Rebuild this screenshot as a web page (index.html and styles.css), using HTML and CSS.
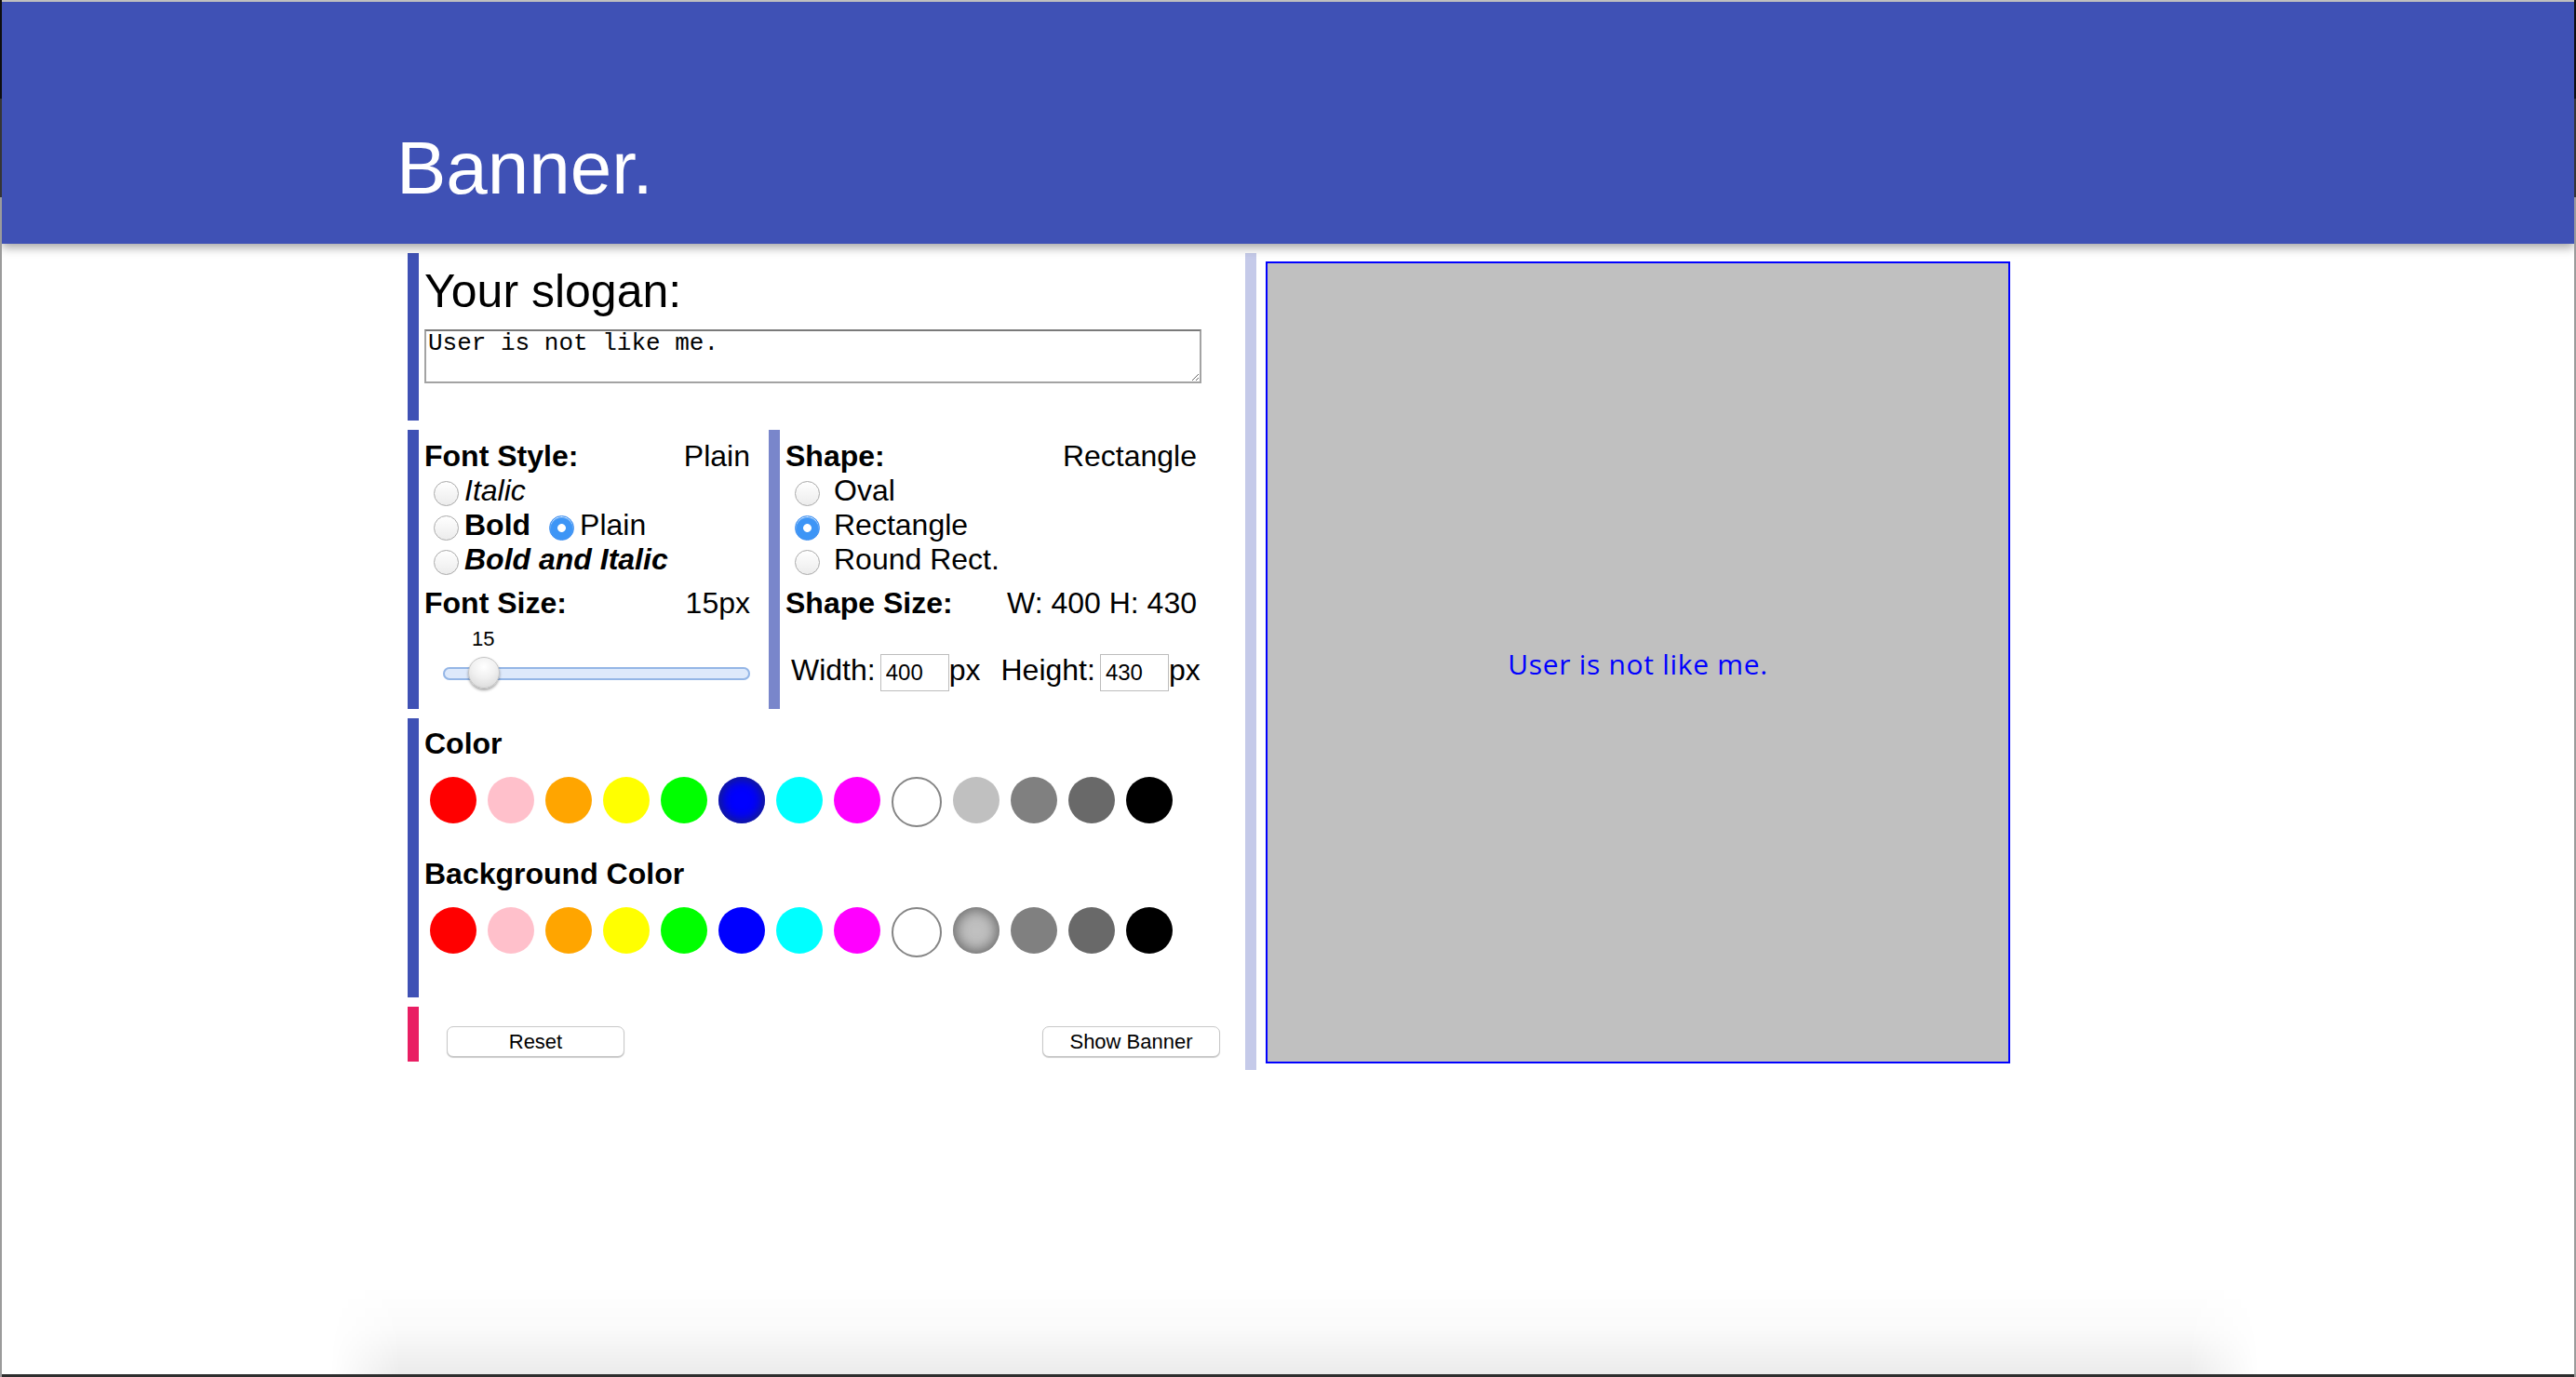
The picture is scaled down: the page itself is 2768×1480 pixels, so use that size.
FILE: index.html
```html
<!DOCTYPE html>
<html lang="en">
<head>
<meta charset="utf-8">
<title>Banner.</title>
<link rel="stylesheet" href="styles.css">
</head>
<body>
<div class="window">
  <header class="topbar">
    <h1 class="brand">Banner.</h1>
  </header>

  <main class="workspace">
    <div class="controls">
      <section class="panel panel-slogan">
        <h2 class="slogan-title">Your slogan:</h2>
        <textarea class="slogan-input">User is not like me.</textarea>
      </section>

      <div class="panel-row">
        <section class="panel panel-font">
          <div class="field-head">
            <span class="field-label">Font Style:</span>
            <span class="field-value">Plain</span>
          </div>
          <label class="opt"><input type="radio" name="fstyle" class="radio"><span class="t-italic">Italic</span></label>
          <div class="opt">
            <label class="choice"><input type="radio" name="fstyle" class="radio"><span class="t-bold">Bold</span></label>
            <label class="choice choice-next"><input type="radio" name="fstyle" class="radio" checked><span>Plain</span></label>
          </div>
          <label class="opt"><input type="radio" name="fstyle" class="radio"><span class="t-bold t-italic">Bold and Italic</span></label>
          <div class="field-head field-gap">
            <span class="field-label">Font Size:</span>
            <span class="field-value">15px</span>
          </div>
          <div class="range-value">15</div>
          <input type="range" class="range" min="10" max="65" value="15">
        </section>

        <section class="panel panel-shape">
          <div class="field-head">
            <span class="field-label">Shape:</span>
            <span class="field-value">Rectangle</span>
          </div>
          <label class="opt"><input type="radio" name="shape" class="radio"><span class="spaced">Oval</span></label>
          <label class="opt"><input type="radio" name="shape" class="radio" checked><span class="spaced">Rectangle</span></label>
          <label class="opt"><input type="radio" name="shape" class="radio"><span class="spaced">Round Rect.</span></label>
          <div class="field-head field-gap">
            <span class="field-label">Shape Size:</span>
            <span class="field-value">W: 400 H: 430</span>
          </div>
          <div class="dims">
            <span class="dim-label">Width:</span>
            <input class="dim-input" type="text" value="400">
            <span class="dim-unit">px</span>
            <span class="dim-label dim-label-next">Height:</span>
            <input class="dim-input" type="text" value="430">
            <span class="dim-unit">px</span>
          </div>
        </section>
      </div>

      <section class="panel panel-colors">
        <div class="color-title">Color</div>
        <div class="swatches">
          <span class="swatch" style="background:#ff0000"></span>
          <span class="swatch" style="background:#ffc0cb"></span>
          <span class="swatch" style="background:#ffa500"></span>
          <span class="swatch" style="background:#ffff00"></span>
          <span class="swatch" style="background:#00ff00"></span>
          <span class="swatch swatch-sel-blue" style="background:#0000ff"></span>
          <span class="swatch" style="background:#00ffff"></span>
          <span class="swatch" style="background:#ff00ff"></span>
          <span class="swatch swatch-white"></span>
          <span class="swatch" style="background:#c0c0c0"></span>
          <span class="swatch" style="background:#808080"></span>
          <span class="swatch" style="background:#696969"></span>
          <span class="swatch" style="background:#000000"></span>
        </div>
        <div class="color-title color-title-next">Background Color</div>
        <div class="swatches">
          <span class="swatch" style="background:#ff0000"></span>
          <span class="swatch" style="background:#ffc0cb"></span>
          <span class="swatch" style="background:#ffa500"></span>
          <span class="swatch" style="background:#ffff00"></span>
          <span class="swatch" style="background:#00ff00"></span>
          <span class="swatch" style="background:#0000ff"></span>
          <span class="swatch" style="background:#00ffff"></span>
          <span class="swatch" style="background:#ff00ff"></span>
          <span class="swatch swatch-white"></span>
          <span class="swatch swatch-sel-gray" style="background:#c0c0c0"></span>
          <span class="swatch" style="background:#808080"></span>
          <span class="swatch" style="background:#696969"></span>
          <span class="swatch" style="background:#000000"></span>
        </div>
      </section>

      <section class="panel panel-actions">
        <button class="btn" type="button">Reset</button>
        <button class="btn" type="button">Show Banner</button>
      </section>
    </div>

    <aside class="preview-col">
      <div class="preview"><span class="preview-text">User is not like me.</span></div>
    </aside>
  </main>

  <div class="bottom-shade"></div>
</div>
</body>
</html>
```

FILE: styles.css
```css
html, body {
  margin: 0;
  padding: 0;
}

body {
  font-family: "Liberation Sans", Arial, Helvetica, sans-serif;
  color: #000;
  background:
    linear-gradient(#0e0e0e 0 106px, #353535 106px 212px, #9b9b9b 212px) 0 0 / 2px 100% no-repeat,
    linear-gradient(#0e0e0e 0 106px, #353535 106px 212px, #9b9b9b 212px) 100% 0 / 2px 100% no-repeat,
    #fff;
}

.window {
  position: relative;
  margin: 0 2px;
  height: 1480px;
  box-sizing: border-box;
  border-top: 2px solid #bfbfbf;
  border-bottom: 3px solid #2e2e2e;
  overflow: hidden;
  background: #fff;
}

/* ---------- header ---------- */
.topbar {
  position: relative;
  z-index: 2;
  height: 260px;
  box-sizing: border-box;
  padding: 139px 0 0 424px;
  background: #3f51b5;
  box-shadow: 0 4px 10px rgba(0, 0, 0, 0.36);
}

.brand {
  margin: 0;
  font-size: 80px;
  line-height: 80px;
  font-weight: normal;
  color: #fff;
}

/* ---------- layout ---------- */
.workspace {
  display: flex;
  align-items: flex-start;
  margin: 10px 0 0 436px;
}

.controls {
  width: 880px;
  display: flex;
  flex-direction: column;
  gap: 10px;
}

.panel {
  box-sizing: border-box;
  border-left: 12px solid #3f51b5;
  padding-left: 6px;
}

.panel-slogan {
  height: 180px;
  padding-top: 13px;
}

.slogan-title {
  margin: 0;
  font-size: 50px;
  line-height: 56px;
  font-weight: normal;
}

.slogan-input {
  display: block;
  margin-top: 13px;
  width: 835px;
  height: 58px;
  box-sizing: border-box;
  padding: 0 2px;
  border: 2px solid #a3a3a3;
  border-top-color: #7a7a7a;
  font-family: "Liberation Mono", "Courier New", monospace;
  font-size: 26px;
  line-height: 26px;
  color: #000;
  background: #fff;
}

.panel-row {
  display: flex;
  height: 300px;
}

.panel-font {
  width: 388px;
  padding: 10px 20px 0 6px;
}

.panel-shape {
  width: 460px;
  padding: 10px 0 0 6px;
  border-left-color: #7986cb;
}

/* ---------- fields ---------- */
.field-head {
  display: flex;
  justify-content: space-between;
  font-size: 32px;
  line-height: 37px;
}

.field-gap {
  margin-top: 10px;
}

.field-label {
  font-weight: bold;
}

.opt {
  display: flex;
  align-items: center;
  height: 37px;
  font-size: 32px;
  line-height: 37px;
}

.choice {
  display: flex;
  align-items: center;
}

.choice-next {
  margin-left: 10px;
}

.radio {
  -webkit-appearance: none;
  appearance: none;
  flex: none;
  width: 27px;
  height: 27px;
  margin: 5px 6px 0 10px;
  box-sizing: border-box;
  border-radius: 50%;
  border: 1px solid #a9a9a9;
  background: linear-gradient(#ffffff, #ececec);
  box-shadow: inset 0 1px 1px rgba(255, 255, 255, 0.9);
}

.radio:checked {
  border-color: #3a8cf0;
  background: radial-gradient(circle, #ffffff 0 4px, #3d95f6 4.8px);
}

.t-italic {
  font-style: italic;
}

.t-bold {
  font-weight: bold;
}

.spaced {
  padding-left: 9px;
}

/* ---------- slider ---------- */
.range-value {
  margin-top: 7px;
  padding-left: 51px;
  font-size: 22px;
  line-height: 25px;
}

.range {
  -webkit-appearance: none;
  appearance: none;
  display: block;
  width: 330px;
  height: 36px;
  margin: 7px 0 0 20px;
  padding: 0;
  background: transparent;
}

.range::-webkit-slider-runnable-track {
  height: 14px;
  border-radius: 7px;
  background: #dde9fb;
  box-shadow: inset 0 0 0 2px #94b6e6;
}

.range::-webkit-slider-thumb {
  -webkit-appearance: none;
  appearance: none;
  width: 34px;
  height: 34px;
  margin-top: -11px;
  box-sizing: border-box;
  border-radius: 50%;
  border: 1px solid #c4c4c4;
  background: radial-gradient(circle at 50% 30%, #ffffff 0, #f0f0f0 45%, #d4d4d4 100%);
  box-shadow: 0 2px 3px rgba(0, 0, 0, 0.35);
}

/* ---------- dimension inputs ---------- */
.dims {
  display: flex;
  align-items: baseline;
  margin-top: 35px;
  padding-left: 6px;
  font-size: 32px;
  line-height: 37px;
}

.dim-label-next {
  margin-left: 22px;
}

.dim-input {
  width: 74px;
  height: 40px;
  margin-left: 5px;
  box-sizing: border-box;
  padding: 0 5px;
  border: 1px solid #bdbdbd;
  font-family: "Liberation Sans", Arial, sans-serif;
  font-size: 24px;
  color: #000;
  background: #fff;
}

/* ---------- colours ---------- */
.panel-colors {
  height: 300px;
  padding-top: 9px;
}

.color-title {
  font-size: 32px;
  line-height: 37px;
  font-weight: bold;
}

.color-title-next {
  margin-top: 32px;
}

.swatches {
  display: flex;
  align-items: flex-start;
  margin-top: 17px;
}

.swatch {
  flex: none;
  width: 50px;
  height: 50px;
  margin: 0 6px;
  border-radius: 50%;
}

.swatch-white {
  background: #fff;
  border: 2px solid #858585;
}

.swatch-sel-blue {
  box-shadow: inset 0 0 12px 3px rgba(26, 35, 110, 0.85);
}

.swatch-sel-gray {
  box-shadow: inset 0 0 14px 3px rgba(70, 70, 70, 0.7);
}

/* ---------- actions ---------- */
.panel-actions {
  height: 59px;
  display: flex;
  justify-content: space-between;
  align-items: flex-start;
  padding: 21px 7px 0 30px;
  border-left-color: #e91e63;
}

.btn {
  width: 191px;
  height: 33px;
  padding: 0;
  border: 1px solid #c8c8c8;
  border-radius: 7px;
  background: #fff;
  box-shadow: 0 1px 1px rgba(0, 0, 0, 0.22);
  font-family: "Liberation Sans", Arial, sans-serif;
  font-size: 22px;
  color: #000;
}

/* ---------- preview ---------- */
.preview-col {
  margin-left: 20px;
  padding: 9px 0 7px 10px;
  border-left: 12px solid #c5cae9;
}

.preview {
  display: flex;
  align-items: center;
  justify-content: center;
  width: 800px;
  height: 862px;
  box-sizing: border-box;
  border: 2px solid #0000ff;
  background: #c0c0c0;
}

.preview-text {
  font-family: "Open Sans", "DejaVu Sans", sans-serif;
  font-size: 30px;
  letter-spacing: 0.7px;
  color: #0000ff;
  padding-top: 3px;
}

/* ---------- bottom shade ---------- */
.bottom-shade {
  position: absolute;
  left: 353px;
  width: 2072px;
  bottom: 0;
  height: 95px;
  background: linear-gradient(to bottom, rgba(0, 0, 0, 0), rgba(0, 0, 0, 0.02) 50%, rgba(0, 0, 0, 0.08));
  -webkit-mask-image: linear-gradient(to right, transparent, #000 75px, #000 calc(100% - 75px), transparent);
  mask-image: linear-gradient(to right, transparent, #000 75px, #000 calc(100% - 75px), transparent);
  pointer-events: none;
}
```
